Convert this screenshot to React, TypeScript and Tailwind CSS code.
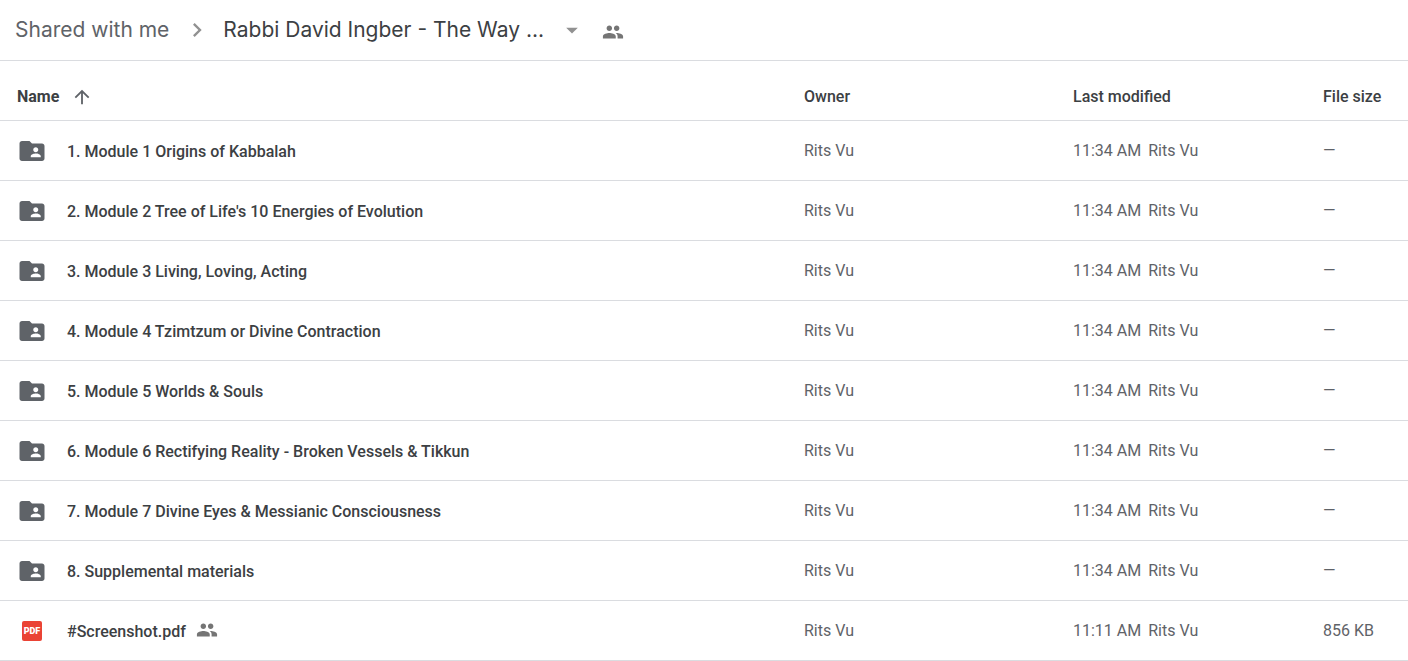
import { MdArrowDropDown, MdArrowUpward, MdChevronRight, MdFolderShared, MdPeople } from "react-icons/md";

type Row = { name: string; modified: string; size: string; pdf?: boolean };

const rows: Row[] = [
  { name: "1. Module 1 Origins of Kabbalah", modified: "11:34 AM", size: "—" },
  { name: "2. Module 2 Tree of Life's 10 Energies of Evolution", modified: "11:34 AM", size: "—" },
  { name: "3. Module 3 Living, Loving, Acting", modified: "11:34 AM", size: "—" },
  { name: "4. Module 4 Tzimtzum or Divine Contraction", modified: "11:34 AM", size: "—" },
  { name: "5. Module 5 Worlds & Souls", modified: "11:34 AM", size: "—" },
  { name: "6. Module 6 Rectifying Reality - Broken Vessels & Tikkun", modified: "11:34 AM", size: "—" },
  { name: "7. Module 7 Divine Eyes & Messianic Consciousness", modified: "11:34 AM", size: "—" },
  { name: "8. Supplemental materials", modified: "11:34 AM", size: "—" },
  { name: "#Screenshot.pdf", modified: "11:11 AM", size: "856 KB", pdf: true },
];

function PdfIcon() {
  return (
    <span className="flex size-[30px] items-center justify-center">
      <span className="flex size-5 items-center justify-center rounded-xs bg-[#ea4335] pt-0.5 text-[9px] leading-none font-black text-white">
        PDF
      </span>
    </span>
  );
}

export default function App() {
  return (
    <main className="bg-white font-['Roboto','Liberation_Sans',sans-serif] text-[#3c4043]">
      <nav
        aria-label="Breadcrumb"
        className="flex h-[61px] items-center border-b border-[#dadce0] pl-[15px] font-['Inter','Roboto',sans-serif] text-[21px] leading-7"
      >
        <a href="#shared" className="text-[#5f6368]">Shared with me</a>
        <MdChevronRight aria-hidden className="mr-3 ml-3.5 size-7 text-[#919191]" />
        <button type="button" className="flex items-center">
          Rabbi David Ingber - The Way ...
          <MdArrowDropDown aria-hidden className="ml-3.5 size-7 text-[#919191]" />
        </button>
        <button type="button" aria-label="Sharing" className="mt-1 ml-4">
          <MdPeople className="size-[22px] text-[#757575]" />
        </button>
      </nav>
      <table className="w-full table-fixed border-separate border-spacing-0 text-left text-base">
        <colgroup>
          <col />
          <col className="w-[269px]" />
          <col className="w-[250px]" />
          <col className="w-[85px]" />
        </colgroup>
        <thead>
          <tr className="h-[60px] *:border-b *:border-[#dadce0] *:pt-3">
            <th aria-sort="ascending" className="pl-[17px] font-bold">
              <button type="button" className="flex items-center gap-3">
                Name
                <MdArrowUpward aria-hidden className="size-[22px] text-[#5f6368]" />
              </button>
            </th>
            <th className="font-medium">Owner</th>
            <th className="font-medium">Last modified</th>
            <th className="font-medium">File size</th>
          </tr>
        </thead>
        <tbody>
          {rows.map((r) => (
            <tr key={r.name} className="h-[60px] text-[#5f6368] *:border-b *:border-[#dadce0]">
              <td className="pl-[17px] font-medium text-[#3c4043]">
                <div className="flex items-center">
                  {r.pdf ? <PdfIcon /> : <MdFolderShared aria-hidden className="size-[30px] text-[#5f6368]" />}
                  <span className="ml-5 pt-0.5">{r.name}</span>
                  {r.pdf && <MdPeople aria-label="Shared" className="mb-0.5 ml-2.5 size-[22px] text-[#757575]" />}
                </div>
              </td>
              <td>Rits Vu</td>
              <td>
                <span className="mr-[7px]">{r.modified}</span>
                <span>Rits Vu</span>
              </td>
              <td>{r.size}</td>
            </tr>
          ))}
        </tbody>
      </table>
    </main>
  );
}
